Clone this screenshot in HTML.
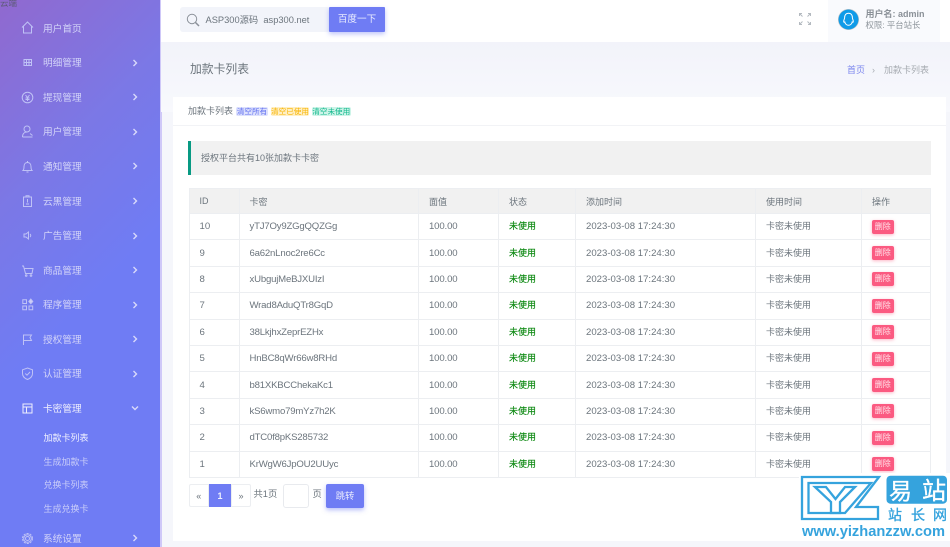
<!DOCTYPE html>
<html lang="zh-CN">
<head>
<meta charset="utf-8">
<title>加款卡列表</title>
<style>
*{box-sizing:border-box;margin:0;padding:0}
html,body{width:950px;height:547px;overflow:hidden;background:#f5f6fb;font-family:"Liberation Sans","Noto Sans CJK SC",sans-serif;color:#6c757d}
#root{position:relative;width:950px;height:547px;overflow:hidden;filter:blur(.3px)}
.abs{position:absolute;white-space:nowrap}
#side{position:absolute;left:0;top:0;width:160px;height:547px;background:linear-gradient(135deg,#9069cf 0%,#7b78e6 30%,#6f7cf4 55%,#6f7cf4 100%)}
#stripe{position:absolute;left:160px;top:0;width:1.5px;height:547px;background:#cfc8f8}
.m{position:absolute;left:43px;font-size:9.7px;line-height:14px;color:#d3d4f8;white-space:nowrap}
.sub{position:absolute;left:43.5px;font-size:9px;line-height:14px;color:#c9cdf9;white-space:nowrap}
.ic{position:absolute;left:20px;width:15px;height:15px;fill:none;stroke:#bfc2f6;stroke-width:1}
.ch{position:absolute;left:131px;width:8px;height:8px;fill:none;stroke:#d8d9fa;stroke-width:1.4}
#top{position:absolute;left:161px;top:0;width:789px;height:42px;background:#fff}
#band{position:absolute;left:161px;top:42px;width:789px;height:70px;background:linear-gradient(#f2f3fa,#f8f9fd)}
#card{position:absolute;left:173px;top:97px;width:773px;height:444px;background:#fff}
#cardhead{position:absolute;left:0;top:0;width:773px;height:29px;border-bottom:1.5px solid #f2f3f6}
.tag{position:absolute;top:10px;height:9px;line-height:9px;font-size:7.6px;text-align:center;border-radius:2px;white-space:nowrap}
#tip{position:absolute;left:188px;top:141px;width:743px;height:34px;background:#f1f1f1;border-left:3px solid #089a83;font-size:9px;line-height:35px;padding-left:10px;color:#6c757d}
table{position:absolute;left:188.5px;top:188px;width:741px;border-collapse:collapse;table-layout:fixed;font-size:9.6px;color:#6c757d}
th,td{border:1px solid #eceef1;padding:0 0 0 10px;text-align:left;font-weight:400;white-space:nowrap;overflow:hidden}
th{height:25px;background:#f1f1f1;font-size:9px}
td{height:26.4px}
td.k{letter-spacing:-.2px}
td.n{letter-spacing:-.15px}
td.g{color:#0f8a14;font-size:9px;-webkit-text-stroke:.15px #0f8a14;padding-bottom:2px}
td.t{font-size:9px;padding-bottom:2px}
.del{display:inline-block;width:21.5px;height:14px;line-height:14px;background:#fb5a81;color:#ffe6ec;font-size:8px;text-align:center;border-radius:2px;box-shadow:0 1px 3px rgba(251,90,129,.45);vertical-align:middle}
.pg{position:absolute;top:484px;height:23px;line-height:22px;text-align:center;font-size:9px;border:1px solid #eceef1;background:#fff;color:#6c757d}
</style>
</head>
<body>
<div id="root">
<div id="side">
  <div class="abs" style="left:0;top:-2px;font-size:8.5px;line-height:11px;color:#5d5a78">云端</div>

  <svg class="ic" style="top:20px" viewBox="0 0 15 15"><path d="M2 7.500 7.500 2 13 7.500M3.500 6.500V13H11.500V6.500"/></svg>
  <div class="m" style="top:23px">用户首页</div>

  <svg class="ic" style="top:55px" viewBox="0 0 15 15"><path d="M4 4.500H11.500V10.500H4ZM4 7.500H11.500M6.500 4.500V10.500M9 4.500V10.500"/></svg>
  <div class="m" style="top:57px">明细管理</div>
  <svg class="ch" style="top:58.500px" viewBox="0 0 8 8"><path d="M2.500 1 5.500 4 2.500 7"/></svg>

  <svg class="ic" style="top:89.500px" viewBox="0 0 15 15"><circle cx="7.500" cy="7.500" r="5.300"/><path d="M5.500 5 7.500 7.500 9.500 5M7.500 7.500V11M5.500 8H9.500M5.500 9.500H9.500"/></svg>
  <div class="m" style="top:92px">提现管理</div>
  <svg class="ch" style="top:93px" viewBox="0 0 8 8"><path d="M2.500 1 5.500 4 2.500 7"/></svg>

  <svg class="ic" style="top:124px" viewBox="0 0 15 15"><circle cx="7" cy="5" r="3"/><path d="M2.500 13C2.500 9.500 4.500 8 7 8M2.500 13H12.500M10 9.500 12.500 11.500"/></svg>
  <div class="m" style="top:126px">用户管理</div>
  <svg class="ch" style="top:128px" viewBox="0 0 8 8"><path d="M2.500 1 5.500 4 2.500 7"/></svg>

  <svg class="ic" style="top:159px" viewBox="0 0 15 15"><path d="M3 11.500H12C11 10.500 11 9.500 11 7.500 11 5 9.500 3.500 7.500 3.500S4 5 4 7.500C4 9.500 4 10.500 3 11.500ZM6.500 13H8.500M7.500 2V3.500"/></svg>
  <div class="m" style="top:161px">通知管理</div>
  <svg class="ch" style="top:162px" viewBox="0 0 8 8"><path d="M2.500 1 5.500 4 2.500 7"/></svg>

  <svg class="ic" style="top:193.500px" viewBox="0 0 15 15"><path d="M3.500 3H11.500V12.500H3.500ZM6 3V1.800H9V3M7.500 5V8.500M6 10H9"/></svg>
  <div class="m" style="top:195.500px">云黑管理</div>
  <svg class="ch" style="top:197px" viewBox="0 0 8 8"><path d="M2.500 1 5.500 4 2.500 7"/></svg>

  <svg class="ic" style="top:228px" viewBox="0 0 15 15"><path d="M4 6H6L8.500 4V11L6 9H4ZM10 6C11 6.800 11 8.200 10 9"/></svg>
  <div class="m" style="top:230px">广告管理</div>
  <svg class="ch" style="top:231.500px" viewBox="0 0 8 8"><path d="M2.500 1 5.500 4 2.500 7"/></svg>

  <svg class="ic" style="top:263px" viewBox="0 0 15 15"><path d="M2 3H3.500L5.500 10.500H12L13 5.500H4.200"/><circle cx="6.200" cy="12.500" r=".8"/><circle cx="11" cy="12.500" r=".8"/></svg>
  <div class="m" style="top:265px">商品管理</div>
  <svg class="ch" style="top:266px" viewBox="0 0 8 8"><path d="M2.500 1 5.500 4 2.500 7"/></svg>

  <svg class="ic" style="top:297px" viewBox="0 0 15 15"><path d="M2.800 2.800H6.500V6.500H2.800ZM2.800 9H6.500V12.700H2.800ZM9 9H12.700V12.700H9Z"/><path d="M10.800 2 12.800 4.500 10.800 6.800 8.800 4.500Z" fill="#cfd0f7"/></svg>
  <div class="m" style="top:299px">程序管理</div>
  <svg class="ch" style="top:300.500px" viewBox="0 0 8 8"><path d="M2.500 1 5.500 4 2.500 7"/></svg>

  <svg class="ic" style="top:332px" viewBox="0 0 15 15"><path d="M3.500 13V3H11.500L10 5.500 11.500 8.500H3.500"/></svg>
  <div class="m" style="top:333.500px">授权管理</div>
  <svg class="ch" style="top:335px" viewBox="0 0 8 8"><path d="M2.500 1 5.500 4 2.500 7"/></svg>

  <svg class="ic" style="top:366px" viewBox="0 0 15 15"><path d="M7.500 2 12.500 3.800V7.500C12.500 10.500 10 12.500 7.500 13.500 5 12.500 2.500 10.500 2.500 7.500V3.800ZM5.300 7.500 7 9.200 10 6"/></svg>
  <div class="m" style="top:368px">认证管理</div>
  <svg class="ch" style="top:370px" viewBox="0 0 8 8"><path d="M2.500 1 5.500 4 2.500 7"/></svg>

  <svg class="ic" style="top:401px;stroke:#eeeefd" viewBox="0 0 15 15"><path d="M3 3H12V12H3ZM3 6H12M6.500 6V12"/></svg>
  <div class="m" style="top:403px;color:#eeeefd">卡密管理</div>
  <svg class="ch" style="top:404px" viewBox="0 0 8 8"><path d="M1 2.500 4 5.500 7 2.500"/></svg>

  <div class="sub" style="top:430.500px;color:#f1f2fe">加款卡列表</div>
  <div class="sub" style="top:454.500px">生成加款卡</div>
  <div class="sub" style="top:477.500px">兑换卡列表</div>
  <div class="sub" style="top:501.500px">生成兑换卡</div>

  <svg class="ic" style="top:531px" viewBox="0 0 15 15"><circle cx="7.500" cy="7.500" r="2"/><circle cx="7.500" cy="7.500" r="5" stroke-dasharray="2.200 1"/><circle cx="7.500" cy="7.500" r="3.800"/></svg>
  <div class="m" style="top:532.500px">系统设置</div>
  <svg class="ch" style="top:534px" viewBox="0 0 8 8"><path d="M2.500 1 5.500 4 2.500 7"/></svg>
</div>
<div id="stripe"></div>

<div id="top"></div>
<div id="band"></div>

<!-- search -->
<div class="abs" style="left:180px;top:7px;width:150px;height:25px;background:#f2f4fa;border-radius:3px"></div>
<svg class="abs" style="left:185px;top:12px;width:16px;height:16px" viewBox="0 0 16 16" fill="none" stroke="#8b9199" stroke-width="1"><circle cx="7" cy="7" r="4.700"/><path d="M10.500 10.500 14 14" stroke-width="1.500"/></svg>
<div class="abs" style="left:205.500px;top:12.500px;font-size:9.300px;line-height:14px;color:#6c757d">ASP300源码&nbsp; asp300.net</div>
<div class="abs" style="left:329px;top:7px;width:56px;height:25px;background:#6f7cf4;border-radius:1px;color:#e9ebfe;font-size:9.600px;line-height:25px;text-align:center;box-shadow:0 2px 5px rgba(111,124,244,.45)">百度一下</div>

<!-- fullscreen -->
<svg class="abs" style="left:798px;top:12px;width:14px;height:14px" viewBox="0 0 14 14" fill="none" stroke="#b4bac0" stroke-width="1"><path d="M1.500 4V1.500H4M1.500 1.500 4.500 4.500M10 1.500H12.500V4M12.500 1.500 9.500 4.500M1.500 10V12.500H4M1.500 12.500 4.500 9.500M10 12.500H12.500V10M12.500 12.500 9.500 9.500"/></svg>

<!-- user -->
<div class="abs" style="left:828px;top:0;width:112px;height:42px;background:#f9fafd"></div>
<svg class="abs" style="left:838px;top:9px;width:21px;height:21px" viewBox="0 0 21 21"><circle cx="10.500" cy="10.500" r="10.200" fill="#0f9be8" stroke="#b9c0c4" stroke-width=".6"/><path d="M10.500 4.300C7.800 4.300 6.600 6.300 6.600 8.800 6.600 10 5.700 11 5.700 12.400 5.700 13.400 6.300 13.500 6.800 13 7.200 15 8.800 16.300 10.500 16.300S13.800 15 14.200 13C14.700 13.500 15.300 13.400 15.300 12.400 15.300 11 14.400 10 14.400 8.800 14.400 6.300 13.200 4.300 10.500 4.300Z" fill="none" stroke="#fff" stroke-width="1"/></svg>
<div class="abs" style="left:865.500px;top:8px;font-size:9px;line-height:12px;font-weight:700;color:#8a9097">用户名: admin</div>
<div class="abs" style="left:865.500px;top:18.500px;font-size:8.400px;line-height:12px;color:#8e959c">权限: 平台站长</div>

<!-- title + crumb -->
<div class="abs" style="left:190px;top:61px;font-size:11.800px;line-height:16px;color:#6c757d">加款卡列表</div>
<div class="abs" style="left:847px;top:64px;font-size:9px;line-height:13px;color:#7a85ee">首页</div>
<div class="abs" style="left:872px;top:64px;font-size:9px;line-height:13px;color:#a8adb3">›</div>
<div class="abs" style="left:884px;top:64px;font-size:9px;line-height:13px;color:#a5aab0">加款卡列表</div>

<!-- card -->
<div id="card">
  <div id="cardhead">
    <div class="abs" style="left:15px;top:8px;font-size:9px;line-height:12px;color:#6c757d">加款卡列表</div>
    <div class="tag" style="left:63px;width:32px;background:#dde1fd;color:#5f6ff0">清空所有</div>
    <div class="tag" style="left:98px;width:38px;background:#ffefc4;color:#f8b400">清空已使用</div>
    <div class="tag" style="left:139px;width:38.500px;background:#cdf4e8;color:#11b88d">清空未使用</div>
  </div>
</div>

<div id="tip">授权平台共有10张加款卡卡密</div>

<table>
<colgroup><col style="width:50px"><col style="width:179.500px"><col style="width:80px"><col style="width:77px"><col style="width:180px"><col style="width:106px"><col style="width:68.500px"></colgroup>
<tr><th>ID</th><th>卡密</th><th>面值</th><th>状态</th><th>添加时间</th><th>使用时间</th><th>操作</th></tr>
<tr><td>10</td><td class="k">yTJ7Oy9ZGgQQZGg</td><td class="n">100.00</td><td class="g">未使用</td><td>2023-03-08 17:24:30</td><td class="t">卡密未使用</td><td><span class="del">删除</span></td></tr>
<tr><td>9</td><td class="k">6a62nLnoc2re6Cc</td><td class="n">100.00</td><td class="g">未使用</td><td>2023-03-08 17:24:30</td><td class="t">卡密未使用</td><td><span class="del">删除</span></td></tr>
<tr><td>8</td><td class="k">xUbgujMeBJXUIzI</td><td class="n">100.00</td><td class="g">未使用</td><td>2023-03-08 17:24:30</td><td class="t">卡密未使用</td><td><span class="del">删除</span></td></tr>
<tr><td>7</td><td class="k">Wrad8AduQTr8GqD</td><td class="n">100.00</td><td class="g">未使用</td><td>2023-03-08 17:24:30</td><td class="t">卡密未使用</td><td><span class="del">删除</span></td></tr>
<tr><td>6</td><td class="k">38LkjhxZeprEZHx</td><td class="n">100.00</td><td class="g">未使用</td><td>2023-03-08 17:24:30</td><td class="t">卡密未使用</td><td><span class="del">删除</span></td></tr>
<tr><td>5</td><td class="k">HnBC8qWr66w8RHd</td><td class="n">100.00</td><td class="g">未使用</td><td>2023-03-08 17:24:30</td><td class="t">卡密未使用</td><td><span class="del">删除</span></td></tr>
<tr><td>4</td><td class="k">b81XKBCChekaKc1</td><td class="n">100.00</td><td class="g">未使用</td><td>2023-03-08 17:24:30</td><td class="t">卡密未使用</td><td><span class="del">删除</span></td></tr>
<tr><td>3</td><td class="k">kS6wmo79mYz7h2K</td><td class="n">100.00</td><td class="g">未使用</td><td>2023-03-08 17:24:30</td><td class="t">卡密未使用</td><td><span class="del">删除</span></td></tr>
<tr><td>2</td><td class="k">dTC0f8pKS285732</td><td class="n">100.00</td><td class="g">未使用</td><td>2023-03-08 17:24:30</td><td class="t">卡密未使用</td><td><span class="del">删除</span></td></tr>
<tr><td>1</td><td class="k">KrWgW6JpOU2UUyc</td><td class="n">100.00</td><td class="g">未使用</td><td>2023-03-08 17:24:30</td><td class="t">卡密未使用</td><td><span class="del">删除</span></td></tr>
</table>

<!-- pagination -->
<div class="pg" style="left:188.500px;width:20.500px;border-radius:2px 0 0 2px">«</div>
<div class="pg" style="left:208.500px;width:23px;background:#6f7cf4;border-color:#6f7cf4;color:#eef0fe;font-weight:700">1</div>
<div class="pg" style="left:231px;width:20px;border-radius:0 2px 2px 0">»</div>
<div class="abs" style="left:253.500px;top:487.500px;font-size:9.300px;line-height:13px;color:#6c757d">共1页</div>
<div class="abs" style="left:283px;top:484px;width:26px;height:24px;background:#fff;border:1px solid #e8eaee;border-radius:3px"></div>
<div class="abs" style="left:312.500px;top:487.500px;font-size:9.300px;line-height:13px;color:#6c757d">页</div>
<div class="abs" style="left:326px;top:484px;width:38px;height:24px;background:#6f7cf4;border-radius:2px;color:#e9ebfe;font-size:9.300px;line-height:24px;text-align:center;box-shadow:0 2px 5px rgba(111,124,244,.5)">跳转</div>

<!-- watermark logo -->
<div class="abs" style="left:799px;top:473px;width:151px;height:68px;background:#fff"></div>
<svg class="abs" style="left:799px;top:473px;width:151px;height:68px" viewBox="0 0 151 68" fill="none" stroke="#35a3dd" stroke-width="2.300">
  <path d="M3 4H80L57 34H79V46H3Z"/>
  <path d="M9.500 10H72L46 40H9.500Z"/>
  <path d="M16 14H27L36.500 26 46 14H56L41 29V40H32V29Z"/>
  <rect x="87.500" y="2.700" width="60.500" height="28" rx="4" fill="#35a3dd" stroke="none"/>
  <g font-family="Noto Sans CJK SC,sans-serif" stroke-width=".35">
    <text x="90" y="26" font-size="23" fill="#fff" stroke="#fff">易</text>
    <text x="123" y="26" font-size="24" fill="#fff" stroke="#fff">站</text>
    <text x="89" y="47" font-size="14" fill="#35a3dd">站</text>
    <text x="112" y="47" font-size="14" fill="#35a3dd">长</text>
    <text x="134" y="47" font-size="14" fill="#35a3dd">网</text>
  </g>
  <text x="3" y="63" font-size="15" fill="#35a3dd" stroke="none" font-family="Liberation Sans,sans-serif" font-weight="700" textLength="143" lengthAdjust="spacingAndGlyphs">www.yizhanzzw.com</text>
</svg>
</div>
</body>
</html>
